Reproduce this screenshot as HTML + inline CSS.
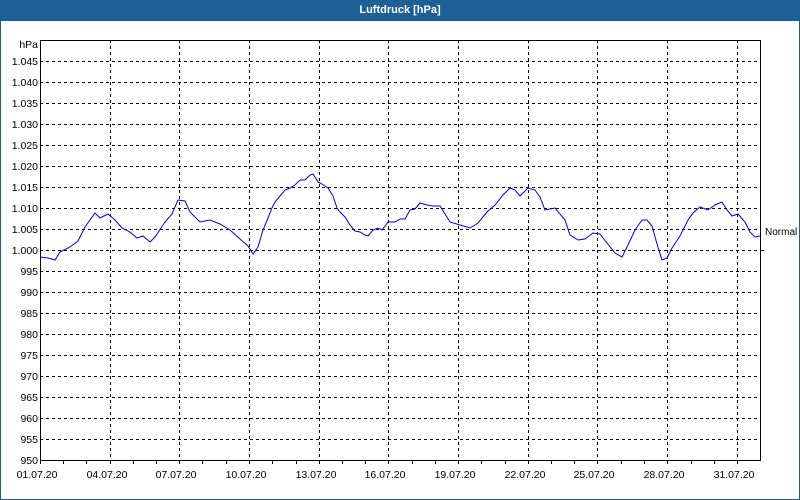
<!DOCTYPE html>
<html><head><meta charset="utf-8"><style>
html,body{margin:0;padding:0;background:#fff;}
.win{position:relative;width:798px;height:498px;border:1px solid #1e5f98;background:#fff;overflow:hidden;font-family:"Liberation Sans",sans-serif;}
.title{position:absolute;left:0;top:0;width:798px;height:20px;background:#1e5f98;color:#fff;font-weight:bold;font-size:11px;text-align:center;line-height:19px;}
svg{position:absolute;left:-1px;top:-1px;}
</style></head><body><div class="win"><div class="title">Luftdruck [hPa]</div>
<svg width="800" height="500" font-family="Liberation Sans, sans-serif" font-size="10.5">
<g stroke="#000" stroke-dasharray="3,3" stroke-width="1" shape-rendering="crispEdges">
<line x1="40" x2="760" y1="61.5" y2="61.5"/><line x1="40" x2="760" y1="82.5" y2="82.5"/><line x1="40" x2="760" y1="103.5" y2="103.5"/><line x1="40" x2="760" y1="124.5" y2="124.5"/><line x1="40" x2="760" y1="145.5" y2="145.5"/><line x1="40" x2="760" y1="166.5" y2="166.5"/><line x1="40" x2="760" y1="187.5" y2="187.5"/><line x1="40" x2="760" y1="208.5" y2="208.5"/><line x1="40" x2="760" y1="229.5" y2="229.5"/><line x1="40" x2="760" y1="250.5" y2="250.5"/><line x1="40" x2="760" y1="271.5" y2="271.5"/><line x1="40" x2="760" y1="292.5" y2="292.5"/><line x1="40" x2="760" y1="313.5" y2="313.5"/><line x1="40" x2="760" y1="334.5" y2="334.5"/><line x1="40" x2="760" y1="355.5" y2="355.5"/><line x1="40" x2="760" y1="376.5" y2="376.5"/><line x1="40" x2="760" y1="397.5" y2="397.5"/><line x1="40" x2="760" y1="418.5" y2="418.5"/><line x1="40" x2="760" y1="439.5" y2="439.5"/>
<line y1="40" y2="460" x1="110.5" x2="110.5"/><line y1="40" y2="460" x1="179.5" x2="179.5"/><line y1="40" y2="460" x1="249.5" x2="249.5"/><line y1="40" y2="460" x1="319.5" x2="319.5"/><line y1="40" y2="460" x1="388.5" x2="388.5"/><line y1="40" y2="460" x1="458.5" x2="458.5"/><line y1="40" y2="460" x1="528.5" x2="528.5"/><line y1="40" y2="460" x1="597.5" x2="597.5"/><line y1="40" y2="460" x1="667.5" x2="667.5"/><line y1="40" y2="460" x1="737.5" x2="737.5"/>
</g>
<g stroke="#000" stroke-width="1" shape-rendering="crispEdges" fill="none">
<rect x="40.5" y="40.5" width="720" height="420"/>
<path d="M63.5 460v4M86.5 460v4M133.5 460v4M156.5 460v4M202.5 460v4M226.5 460v4M272.5 460v4M296.5 460v4M342.5 460v4M365.5 460v4M412.5 460v4M435.5 460v4M481.5 460v4M505.5 460v4M551.5 460v4M574.5 460v4M621.5 460v4M644.5 460v4M691.5 460v4M714.5 460v4M40.5 460v4M110.5 460v4M179.5 460v4M249.5 460v4M319.5 460v4M388.5 460v4M458.5 460v4M528.5 460v4M597.5 460v4M667.5 460v4M737.5 460v4M760 250.5h4"/>
</g>
<polyline fill="none" stroke="#0000ee" stroke-width="1" points="40,257 48,258 55,260 60,252 70,247 78,241 85,227 95,213 100,218 108,214 115,220 122,228 130,232 137,238 143,236 150,242 155,237 165,222 172,214 178,200 185,201 190,212 200,222 210,220 220,224 230,230 240,239 248,246 253,254 258,247 263,230 268,218 272,208 275,202 280,196 285,190 290,188 295,185 300,180 305,180 310,175 313,174 318,182 322,184 328,188 333,196 337,208 340,212 345,217 350,225 355,231 360,232 365,235 368,236 373,230 378,228 382,230 388,222 395,222 400,219 405,219 410,210 415,209 420,203 427,205 433,206 440,206 450,222 460,225 470,228 478,223 487,212 495,205 503,195 510,188 515,190 520,196 528,188 535,190 540,197 545,210 555,208 565,220 570,235 578,240 585,239 593,233 600,234 607,243 615,253 622,257 628,245 635,230 642,220 647,220 652,226 657,244 662,260 667,258 672,248 680,236 688,220 693,213 700,207 708,210 715,205 722,202 727,210 732,216 738,214 745,222 750,232 755,237 760,236"/>
<g fill="#000" text-anchor="end">
<text x="38" y="48">hPa</text>
<text x="38" y="65">1.045</text><text x="38" y="86">1.040</text><text x="38" y="107">1.035</text><text x="38" y="128">1.030</text><text x="38" y="149">1.025</text><text x="38" y="170">1.020</text><text x="38" y="191">1.015</text><text x="38" y="212">1.010</text><text x="38" y="233">1.005</text><text x="38" y="254">1.000</text><text x="38" y="275">995</text><text x="38" y="296">990</text><text x="38" y="317">985</text><text x="38" y="338">980</text><text x="38" y="359">975</text><text x="38" y="380">970</text><text x="38" y="401">965</text><text x="38" y="422">960</text><text x="38" y="443">955</text><text x="38" y="464">950</text>
</g>
<g fill="#000" text-anchor="middle">
<text x="37" y="478">01.07.20</text><text x="107" y="478">04.07.20</text><text x="176" y="478">07.07.20</text><text x="246" y="478">10.07.20</text><text x="316" y="478">13.07.20</text><text x="385" y="478">16.07.20</text><text x="455" y="478">19.07.20</text><text x="525" y="478">22.07.20</text><text x="594" y="478">25.07.20</text><text x="664" y="478">28.07.20</text><text x="734" y="478">31.07.20</text>
</g>
<text x="765" y="235" fill="#000" font-size="10">Normal</text>
</svg></div></body></html>
